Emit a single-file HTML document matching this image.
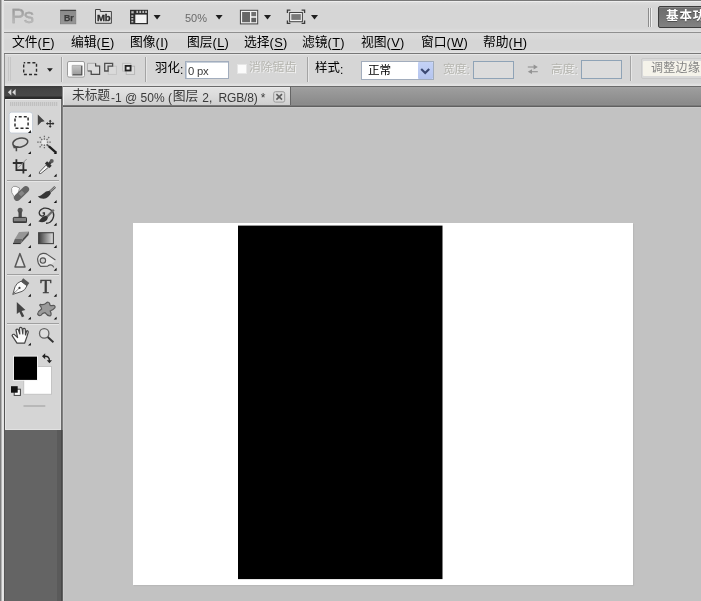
<!DOCTYPE html>
<html lang="zh">
<head>
<meta charset="utf-8">
<title>Photoshop</title>
<style>
*{box-sizing:border-box;margin:0;padding:0}
html,body{width:701px;height:601px;overflow:hidden}
body{position:relative;background:#c2c2c2;font-family:"Liberation Sans",sans-serif;font-size:12px;color:#000}
.a{position:absolute}
svg{display:block;overflow:visible}
.t{position:absolute;white-space:nowrap;display:flex;align-items:flex-start;line-height:1}
.t span{display:block}
.t span.c{font-family:"Liberation Sans","Noto Sans CJK SC",sans-serif;white-space:nowrap;overflow:visible;flex:none}
/* bars */
#appbar{left:0;top:0;width:701px;height:33px;background:linear-gradient(#787878 0,#787878 1px,#eeeeee 1px,#eeeeee 2px,#dddddd 2px,#d6d6d6 6px,#d6d6d6 28px,#dadada 30px,#e2e2e2 32px,#909090 32px)}
#menubar{left:0;top:33px;width:701px;height:21px;background:linear-gradient(#dbdbdb 0,#d9d9d9 5px,#d6d6d6 7px,#d6d6d6 17px,#e0e0e0 19px,#e4e4e4 20px,#777 20px)}
#optbar{left:0;top:54px;width:701px;height:33px;background:linear-gradient(#e6e6e6 0,#e6e6e6 1px,#d8d8d8 1px,#d6d6d6 4px,#d6d6d6 29px,#dedede 30px,#e4e4e4 32px,#6a6a6a 32px)}
#tabbar{left:0;top:87px;width:701px;height:20px;background:linear-gradient(#a2a2a2 0,#9c9c9c 2px,#8a8a8a 17px,#8e8e8e 18px,#787878 18px,#787878 19px,#606060 19px)}
#frameL{left:0;top:0;width:4px;height:601px;background:linear-gradient(90deg,#7e7e7e 0,#7e7e7e 1px,#b4b4b4 1px,#b4b4b4 2px,#e8e8e8 2px,#e2e2e2 4px)}
#frameL2{left:4px;top:54px;width:1px;height:547px;background:linear-gradient(#8e8e8e 0,#8e8e8e 32px,#555 32px)}
.t,#ps,#zoomtxt,#feathertxt,svg.a{will-change:transform}
#canvasbg{left:63px;top:107px;width:638px;height:494px;background:linear-gradient(#c9c9c9 0,#c9c9c9 1px,#c2c2c2 1px)}
#doc{left:133px;top:223px;width:500px;height:362px;background:#fff;box-shadow:1px 1px 1px rgba(0,0,0,.05)}
.menu{top:35.8px;color:#000;font-size:12.8px}
.menu span{padding-top:.6px;letter-spacing:.3px}
.menu u{text-decoration:underline;text-underline-offset:1.5px}

/* app bar */
#ps{left:11px;top:4.4px;font-size:21px;letter-spacing:-1.2px;color:transparent;line-height:24px;height:24px;background:linear-gradient(#999 5px,#bcbcbc 19px);-webkit-background-clip:text;background-clip:text;-webkit-text-stroke:.35px #aaa}
#zoomtxt{left:185px;top:11px;font-size:11px;color:#6a6a6a;line-height:14px}
#wsbtn{left:658px;top:6px;width:60px;height:22px;border:1px solid #3c3c3c;border-radius:2px;background:linear-gradient(#6c6c6c,#747474 50%,#828282);box-shadow:inset 0 1px 0 #8a8a8a;color:#fff}
/* options bar */
.opt{color:#000}
.dis{color:#b6b6b0;filter:drop-shadow(1px 1px 0 #f2f2f2)}
.inp{border:1px solid #a2adbd;background:#fff}
.inpd{border:1px solid #8fa3b6;background:#dcdcdc}
#feather{left:185px;top:61px;width:44px;height:18px;box-shadow:inset 1px 1px 0 #c8d0da}
#feathertxt{left:188.3px;top:64.3px;font-size:11.3px;letter-spacing:-.2px;color:#3c3c3c;line-height:14px}
#style{left:361px;top:61px;width:73px;height:19px}
#stylebtn{left:418px;top:62px;width:15px;height:17px;background:linear-gradient(#c4d2f6,#b4c4ee);border-radius:1px}
#w1{left:473px;top:61px;width:41px;height:18px}
#w2{left:581px;top:60px;width:41px;height:19px}
#chk{left:237px;top:64px;width:10px;height:10px;background:#fbfbfb;border:1px solid #e6e6e6}
#edgebtn{left:641px;top:58px;width:70px;height:21px;border:1px solid #c9c9c9;border-radius:2px;background:#d9d9d9}
#edgebtn i{position:absolute;left:1px;top:2px;right:0;height:15px;background:#f5f3ea;border-radius:1px}
.vsep{width:2px;background:linear-gradient(90deg,#a4a4a4 0,#a4a4a4 1px,#e6e6e6 1px)}
/* tab */
#tab{left:63px;top:87px;width:228px;height:18px;background:linear-gradient(#efefef 0,#e2e2e2 1px,#dcdcdc 8px,#cfcfcf 18px);border-right:1px solid #666;border-left:1px solid #eee}
#tabtxt{left:72.2px;top:90.2px;color:#3a3a3a;font-size:12px}
#tabtxt span{padding-top:1.5px}
/* tools */
#toolhdr{left:5px;top:86px;width:57px;height:13px;background:linear-gradient(#3a3a3a 0,#444 3px,#484848 10px,#2c2c2c 11px,#2a2a2a 13px)}
#tools{left:5px;top:99px;width:56px;height:331px;background:#d5d5d5;border-top:1px solid #efefef;border-left:1px solid #e4e4e4;border-right:1px solid #dedede;border-bottom:1px solid #e2e2e2}
#toolsR{left:61px;top:99px;width:2px;height:331px;background:linear-gradient(90deg,#6a6a6a 0,#6a6a6a 1px,#808080 1px)}
#toolsR4{left:61px;top:430px;width:2px;height:171px;background:linear-gradient(90deg,#484848 0,#484848 1px,#606060 1px)}
#toolsR3{left:62px;top:86px;width:1px;height:13px;background:#8a8a8a}
#toolsR2{left:63px;top:107px;width:1px;height:494px;background:#cacaca}
#dock{left:5px;top:430px;width:56px;height:171px;background:linear-gradient(90deg,#646464 0,#646464 52px,#5a5a5a 52px)}
#grip{left:10px;top:102px;width:48px;height:4px;background:repeating-linear-gradient(90deg,#c0c0c0 0,#c0c0c0 1px,#cfcfcf 1px,#cfcfcf 2px)}
#seltool{left:9px;top:112px;width:24px;height:21px;background:#fdfdfd;border:1px solid #c2cad2;border-radius:3px}
.hsep{left:7px;width:52px;height:2px;background:linear-gradient(#a0a0a0 0,#a0a0a0 1px,#e6e6e6 1px)}
</style>
</head>
<body>
<div id="canvasbg" class="a"></div>
<div id="doc" class="a"></div>
<svg class="a" style="left:0;top:0" width="701" height="601"><rect x="238" y="225.6" width="204.5" height="353.5" fill="#000"/></svg>

<div id="appbar" class="a"></div>
<div id="menubar" class="a"></div>
<div id="optbar" class="a"></div>
<div id="tabbar" class="a"></div>
<div id="frameL" class="a"></div>
<div id="frameL2" class="a"></div>

<!-- menu -->
<div class="t menu" style="left:12px"><span class="c" style="width:25.6px;height:15.84px;font-size:12.8px;line-height:12px;padding-top:0;letter-spacing:0">文件</span><span>(<u>F</u>)</span></div>
<div class="t menu" style="left:71px"><span class="c" style="width:25.6px;height:15.84px;font-size:12.8px;line-height:12px;padding-top:0;letter-spacing:0">编辑</span><span>(<u>E</u>)</span></div>
<div class="t menu" style="left:130px"><span class="c" style="width:25.6px;height:15.84px;font-size:12.8px;line-height:12px;padding-top:0;letter-spacing:0">图像</span><span>(<u>I</u>)</span></div>
<div class="t menu" style="left:186.5px"><span class="c" style="width:25.6px;height:15.84px;font-size:12.8px;line-height:12px;padding-top:0;letter-spacing:0">图层</span><span>(<u>L</u>)</span></div>
<div class="t menu" style="left:244px"><span class="c" style="width:25.6px;height:15.84px;font-size:12.8px;line-height:12px;padding-top:0;letter-spacing:0">选择</span><span>(<u>S</u>)</span></div>
<div class="t menu" style="left:302px"><span class="c" style="width:25.6px;height:15.84px;font-size:12.8px;line-height:12px;padding-top:0;letter-spacing:0">滤镜</span><span>(<u>T</u>)</span></div>
<div class="t menu" style="left:361px"><span class="c" style="width:25.6px;height:15.84px;font-size:12.8px;line-height:12px;padding-top:0;letter-spacing:0">视图</span><span>(<u>V</u>)</span></div>
<div class="t menu" style="left:421px"><span class="c" style="width:25.6px;height:15.84px;font-size:12.8px;line-height:12px;padding-top:0;letter-spacing:0">窗口</span><span>(<u>W</u>)</span></div>
<div class="t menu" style="left:483px"><span class="c" style="width:25.6px;height:15.84px;font-size:12.8px;line-height:12px;padding-top:0;letter-spacing:0">帮助</span><span>(<u>H</u>)</span></div>

<!-- app bar -->
<div id="ps" class="a">Ps</div>
<div id="zoomtxt" class="a">50%</div>
<div id="wsbtn" class="a"></div>
<div class="t" style="left:665.6px;top:10.6px;color:#fff;filter:drop-shadow(0 1px 0 rgba(0,0,0,.35))"><span class="c" style="width:40.2px;height:14.16px;font-size:12.5px;font-weight:bold;letter-spacing:.9px;line-height:10px">基本功</span></div>

<!-- options bar -->
<div class="a vsep" style="left:61px;top:57px;height:25px"></div>
<div class="a vsep" style="left:145px;top:57px;height:25px"></div>
<div class="a vsep" style="left:306.5px;top:57px;height:25px"></div>
<div class="a vsep" style="left:630px;top:56px;height:25px"></div>
<div class="t opt" style="left:154.8px;top:62.5px"><span class="c" style="width:25px;height:14.88px;font-size:12.4px;letter-spacing:.1px;line-height:11px">羽化</span><span style="font-size:12px;padding-top:1px">:</span></div>
<div id="feather" class="a inp"></div>
<div id="feathertxt" class="a">0 px</div>
<div id="chk" class="a"></div>
<div class="t dis" style="left:248.5px;top:61.5px"><span class="c" style="width:47.2px;height:14.4px;font-size:11.8px;line-height:10.8px">消除锯齿</span></div>
<div class="t opt" style="left:314.6px;top:63px"><span class="c" style="width:25px;height:14.88px;font-size:12.4px;letter-spacing:.1px;line-height:11px">样式</span><span style="font-size:12px;padding-top:1px">:</span></div>
<div id="style" class="a inp"></div>
<div id="stylebtn" class="a"></div>
<div class="t opt" style="left:367.5px;top:64px"><span class="c" style="width:23.2px;height:14.4px;font-size:11.6px;line-height:11px">正常</span></div>
<div class="t dis" style="left:443px;top:62.5px"><span class="c" style="width:23.4px;height:14.4px;font-size:11.7px;line-height:11px">宽度</span><span style="font-size:12px;padding-top:1px">:</span></div>
<div id="w1" class="a inpd"></div>
<div class="t dis" style="left:551px;top:62.5px"><span class="c" style="width:23.4px;height:14.4px;font-size:11.7px;line-height:11px">高度</span><span style="font-size:12px;padding-top:1px">:</span></div>
<div id="w2" class="a inpd"></div>
<div id="edgebtn" class="a"><i></i></div>
<div class="t" style="left:651.3px;top:62.7px;color:#858585"><span class="c" style="width:49.2px;height:14.4px;font-size:12px;letter-spacing:.3px;line-height:10.4px">调整边缘</span><span style="font-size:12px;padding-top:1px">...</span></div>

<!-- tab -->
<div id="tab" class="a"></div>
<div id="tabtxt" class="t"><span class="c" style="width:38.1px;height:15.6px;font-size:12.7px;line-height:11.8px;padding-top:0">未标题</span><span style="margin-left:1px">-1 @ 50% (</span><span class="c" style="width:25.6px;height:15.6px;font-size:12.8px;line-height:11.8px;padding-top:0;margin-left:.8px">图层</span><span style="margin-left:.6px">&nbsp;2,</span><span style="margin-left:6.2px;letter-spacing:-.15px">RGB/8) *</span></div>

<!-- tools -->
<div id="toolhdr" class="a"></div>
<div id="tools" class="a"></div>
<div id="dock" class="a"></div>
<div id="toolsR" class="a"></div>
<div id="toolsR4" class="a"></div>
<div id="toolsR3" class="a"></div>
<div id="toolsR2" class="a"></div>
<div id="grip" class="a"></div>
<div class="a hsep" style="top:180px"></div>
<div class="a hsep" style="top:274px"></div>
<div class="a hsep" style="top:323px"></div>

<svg class="a" style="left:0;top:0" width="701" height="601" viewBox="0 0 701 601">
<defs>
<linearGradient id="gH" x1="0" x2="1" y1="0" y2="0"><stop offset="0" stop-color="#3c3c3c"/><stop offset="1" stop-color="#e2e2e2"/></linearGradient>
<linearGradient id="gV" x1="0" x2="0" y1="0" y2="1"><stop offset="0" stop-color="#c6c6c6"/><stop offset="1" stop-color="#9a9a9a"/></linearGradient>
<linearGradient id="gBr" x1="0" x2="0" y1="0" y2="1"><stop offset="0" stop-color="#8a8a8a"/><stop offset="1" stop-color="#969696"/></linearGradient>
<path id="ct" d="M0,0 L0,-2.9 L-2.9,0 Z" fill="#101010"/>
<path id="dd" d="M0,0 L7,0 L3.5,4.6 Z" fill="#1e1e1e"/>
</defs>

<!-- ===== app bar icons ===== -->
<g id="ic-br">
<rect x="60.5" y="10.3" width="15.3" height="13.5" fill="url(#gBr)" stroke="#808080" stroke-width=".8"/>
<rect x="60.3" y="9.8" width="15.6" height="1.2" fill="#444"/>
<text x="68.7" y="20.8" font-size="8.8" font-weight="bold" fill="#3c3c3c" stroke="#3c3c3c" stroke-width=".25" text-anchor="middle" font-family="Liberation Sans, sans-serif" letter-spacing="-.3">Br</text>
</g>
<g id="ic-mb">
<path d="M95.5,23.3 L95.5,9.5 L100.3,9.5 L100.3,11.5 L111.4,11.5 L111.4,23.3 Z" fill="#dedede" stroke="#444" stroke-width="1"/>
<text x="103.6" y="20.7" font-size="9.6" font-weight="bold" fill="#2a2a2a" stroke="#2a2a2a" stroke-width=".3" text-anchor="middle" font-family="Liberation Sans, sans-serif" letter-spacing="-.3">Mb</text>
</g>
<g id="ic-film">
<rect x="130" y="9.8" width="18" height="14.4" fill="#2e2e2e"/>
<rect x="135.3" y="14.6" width="11.3" height="8.4" fill="#f4f4f4"/>
<g fill="#bdbdbd">
<rect x="131.3" y="11.2" width="2.4" height="2.2"/>
<rect x="136.4" y="10.8" width="1.7" height="2.2"/><rect x="139.4" y="10.8" width="1.7" height="2.2"/><rect x="142.4" y="10.8" width="1.7" height="2.2"/><rect x="145.2" y="10.8" width="1.7" height="2.2"/>
<rect x="131.3" y="15.2" width="2" height="1.7"/><rect x="131.3" y="18" width="2" height="1.7"/><rect x="131.3" y="20.8" width="2" height="1.7"/>
</g>
</g>
<use href="#dd" x="153.6" y="14.9"/>
<use href="#dd" x="215.6" y="14.9"/>
<g id="ic-arr">
<rect x="240.4" y="10.3" width="17.3" height="13.6" fill="#f2f2f2" stroke="#444" stroke-width="1"/>
<rect x="242.1" y="12" width="7.9" height="10.2" fill="#666"/>
<rect x="251.3" y="12" width="4.8" height="4.2" fill="#707070"/>
<rect x="251.3" y="17.8" width="4.8" height="4.4" fill="#606060"/>
</g>
<use href="#dd" x="264" y="14.9"/>
<g id="ic-scr">
<g fill="none" stroke="#3c3c3c" stroke-width="1.3">
<path d="M287.4,13 L287.4,10.2 L290.4,10.2"/><path d="M301.6,10.2 L304.6,10.2 L304.6,13"/>
<path d="M287.4,20.6 L287.4,23.4 L290.4,23.4"/><path d="M301.6,23.4 L304.6,23.4 L304.6,20.6"/>
</g>
<rect x="289.6" y="12.5" width="12.8" height="9.2" fill="#f0f0f0" stroke="#444" stroke-width="1"/>
<rect x="291.3" y="14.1" width="9.5" height="5.8" fill="#787878"/>
</g>
<use href="#dd" x="311" y="14.9"/>
<g id="ic-wssep">
<rect x="648" y="8" width="1" height="19" fill="#8c8c8c"/><rect x="649" y="8" width="1" height="19" fill="#ececec"/>
<rect x="650" y="8" width="1" height="19" fill="#9c9c9c"/><rect x="651" y="8" width="1" height="19" fill="#f0f0f0"/>
</g>

<!-- ===== options bar icons ===== -->
<g id="ic-optgrip" fill="#c6c6c6">
<rect x="8" y="57" width="1" height="24"/><rect x="10" y="57" width="1" height="24"/>
</g>
<rect x="23.7" y="62.7" width="12.8" height="11.8" fill="none" stroke="#2c2c2c" stroke-width="1.4" stroke-dasharray="3 2.1" stroke-dashoffset="1.5"/>
<path d="M47,68.2 L52.8,68.2 L49.9,71.8 Z" fill="#1e1e1e"/>
<g id="ic-selmode">
<rect x="67.5" y="61.5" width="17" height="15.6" rx="1.5" fill="#fcfcfc" stroke="#9c9c9c" stroke-width="1"/>
<rect x="72.2" y="65.4" width="9.6" height="9.4" fill="url(#gV)"/>
<path d="M72.2,74.8 L81.8,74.8 L81.8,65.4" fill="none" stroke="#4a4a4a" stroke-width="1.2"/>
<path d="M72.2,74.8 L72.2,65.4 L81.8,65.4" fill="none" stroke="#b0b0b0" stroke-width="1"/>
<!-- add -->
<path d="M87.5,63.3 L95.6,63.3 L95.6,66 L99.6,66 L99.6,74.4 L91.2,74.4 L91.2,71 L87.5,71 Z" fill="#dcdcdc" stroke="#a8a8a8" stroke-width=".9"/>
<path d="M95.6,63.3 L95.6,66 L99.6,66 L99.6,74.4 L91.2,74.4 L91.2,71 L87.8,71" fill="none" stroke="#4c4c4c" stroke-width="1.2"/>
<!-- subtract -->
<rect x="108.2" y="66.2" width="8.2" height="8.2" fill="#dadada" stroke="#c2c2c2" stroke-width=".9"/>
<path d="M104.7,63.3 L112.6,63.3 L112.6,66.1 L108.1,66.1 L108.1,71 L104.7,71 Z" fill="#d8d8d8" stroke="#505050" stroke-width="1.3"/>
<!-- intersect -->
<rect x="122.6" y="63.3" width="8.2" height="7.8" fill="#dcdcdc" stroke="#bcbcbc" stroke-width=".9"/>
<rect x="126.2" y="66.2" width="8.4" height="8.2" fill="#dcdcdc" stroke="#b4b4b4" stroke-width=".9"/>
<rect x="125.6" y="65.9" width="5" height="4.6" fill="#e8e8e8" stroke="#222" stroke-width="1.8"/>
</g>
<g id="ic-chev"><path d="M421.2,68.9 L425.2,72.9 L429.2,68.9" fill="none" stroke="#3a4872" stroke-width="2.1"/></g>
<g id="ic-swapwh" stroke="#939393" fill="#939393">
<path d="M527.8,67 L535,67" stroke-width="1.1"/><path d="M533.6,64.6 L537.8,67 L533.6,69.4 Z" stroke="none"/>
<path d="M530.6,71.7 L537.8,71.7" stroke-width="1.1"/><path d="M532,69.3 L527.8,71.7 L532,74.1 Z" stroke="none"/>
</g>
<g id="ic-tabclose">
<rect x="273.7" y="91.7" width="11" height="10.4" rx="1.8" fill="#dadada" stroke="#9a9a9a" stroke-width="1"/>
<path d="M276.4,94.2 L282,99.6 M282,94.2 L276.4,99.6" stroke="#5c5c5c" stroke-width="1.6" fill="none"/>
</g>
<g id="ic-collapse" fill="#d8d8d8"><path d="M11.3,89 L11.3,95.4 L7.9,92.2 Z"/><path d="M15.6,89 L15.6,95.4 L12.2,92.2 Z"/></g>

<!-- ===== tool icons ===== -->
<g id="corner-tris">
<use href="#ct" x="30.9" y="132.9"/>
<use href="#ct" x="30.9" y="154.1"/><use href="#ct" x="56.6" y="154.1"/>
<use href="#ct" x="30.9" y="176.7"/><use href="#ct" x="56.6" y="176.7"/>
<use href="#ct" x="30.9" y="202.9"/><use href="#ct" x="56.6" y="202.9"/>
<use href="#ct" x="30.9" y="225.7"/><use href="#ct" x="56.6" y="225.7"/>
<use href="#ct" x="30.9" y="248"/><use href="#ct" x="56.6" y="248"/>
<use href="#ct" x="30.9" y="270.7"/><use href="#ct" x="56.6" y="270.7"/>
<use href="#ct" x="30.9" y="296.7"/><use href="#ct" x="56.6" y="296.7"/>
<use href="#ct" x="30.9" y="319.6"/><use href="#ct" x="56.6" y="319.6"/>
<use href="#ct" x="30.9" y="345.6"/>
</g>
<!-- marquee -->
<rect x="9.1" y="112.1" width="23.5" height="21" rx="2.6" fill="#fdfdfd" stroke="#c4ccd6" stroke-width="1"/>
<use href="#ct" x="30.9" y="132.9"/>
<rect x="15" y="116.7" width="13.1" height="11.5" fill="none" stroke="#2c2c2c" stroke-width="1.5" stroke-dasharray="3 2.1" stroke-dashoffset="1.4"/>
<!-- move -->
<path d="M37.8,114.4 L44.7,121.3 L41.3,121.9 L37.8,125.4 Z" fill="#444"/>
<g stroke="#2e2e2e" stroke-width="1.1" fill="#2e2e2e">
<path d="M46.6,123.6 L53.8,123.6 M50.2,120.4 L50.2,127.2" fill="none"/>
<path d="M48.7,121.6 L50.2,119.8 L51.7,121.6 Z M48.7,125.9 L50.2,127.7 L51.7,125.9 Z M47.8,122.1 L46,123.6 L47.8,125.1 Z M52.6,122.1 L54.4,123.6 L52.6,125.1 Z" stroke="none"/>
</g>
<!-- lasso -->
<g fill="none" stroke="#4a4a4a" stroke-width="1.55">
<ellipse cx="20.3" cy="142.6" rx="7.6" ry="4.4" transform="rotate(-12 20.3 142.6)"/>
<path d="M12.8,145.4 Q15.8,146 16.4,148 L16.4,151.2 M13.4,147.6 L18.6,147"/>
</g>
<!-- wand -->
<g>
<circle cx="44.4" cy="142.2" r="2.7" fill="#e9e9e9"/>
<g stroke="#6a6a6a" stroke-width="1.25" fill="none" stroke-dasharray="1.5 1">
<path d="M44.4,135.8 L44.4,140 M44.4,144.6 L44.4,148.2 M37.2,142.2 L42,142.2 M46.8,142.2 L51.8,142.2"/>
<path d="M39.6,137 L42.6,140.4 M49.2,137 L46.2,140.4 M39.6,147.4 L42.6,144"/>
</g>
<path d="M46.6,144.4 L49.4,146.8" stroke="#555" stroke-width="1.6" fill="none"/><path d="M49,146.4 L56,152.6" stroke="#1e1e1e" stroke-width="2.3" fill="none"/>
</g>
<!-- crop -->
<g stroke="#2e2e2e" stroke-width="1.8" fill="none">
<path d="M12.8,163 L23.4,163 L23.4,173.6"/>
<path d="M16.4,159.3 L16.4,170.2 L26.8,170.2"/>
<path d="M18.2,167.6 L26.6,159.1" stroke="#8c8c8c" stroke-width="1"/>
</g>
<!-- eyedropper -->
<g>
<path d="M46,165.2 L39.5,172 L39.3,173.6 L40.9,173.5 L48.4,167.3 Z" fill="#fafafa" stroke="#5c5c5c" stroke-width="1"/>
<path d="M46,162.4 L50.6,166.8" stroke="#303030" stroke-width="3.2" fill="none"/>
<path d="M49,164 L51.4,161.4" stroke="#3a3a3a" stroke-width="2.6" fill="none"/>
<circle cx="51.7" cy="160.9" r="2" fill="#5a5a5a"/>
</g>
<!-- healing -->
<g>
<path d="M14.5,197.4 Q10.4,192 11.6,188.4 Q13,185.4 16,186.4 L19.6,188 L17.2,196.6 Z" fill="#fbfbfb" stroke="#8e8e8e" stroke-width=".9"/>
<path d="M17.2,197.6 L25.8,189.4" stroke="#646464" stroke-width="6.6" stroke-linecap="round" fill="none"/>
<path d="M19.8,195.1 L23.2,191.9" stroke="#858585" stroke-width="4" fill="none"/>
</g>
<!-- brush -->
<g>
<path d="M55.2,186.8 L49.8,191.8" stroke="#5e5e5e" stroke-width="2.5" fill="none"/>
<path d="M55.1,186.9 L49.6,191.9" stroke="#c8c8c8" stroke-width=".7" fill="none"/>
<path d="M49.4,190.8 Q45.6,191.2 43.4,193.4 Q41,195.8 37.8,196.5 Q39.8,198.9 43.8,198.8 Q48.6,198.2 51,193 Z" fill="#363636"/>
</g>
<!-- stamp -->
<g>
<circle cx="20.1" cy="210.2" r="2.5" fill="#555"/>
<rect x="18.5" y="211.6" width="3.3" height="5.8" fill="#484848"/>
<rect x="13.3" y="217.4" width="13.2" height="4.9" rx=".8" fill="#808080" stroke="#333" stroke-width="1"/>
<rect x="13" y="221.4" width="13.8" height="1.3" fill="#333"/>
</g>
<!-- history brush -->
<g fill="none">
<path d="M42.6,213 L44.4,213 L44.4,214.6 Q43.6,216.5 41.6,216.1 Q39.2,215.2 39.2,212.7 Q39.6,209.6 44,208.2 Q48,207.6 51,210 Q54.2,212.6 53.7,216 Q53,220.4 50,222.2 Q48,223.4 46,223.2" stroke="#333" stroke-width="1.3"/>
<path d="M53.8,209.8 L47,216.8" stroke="#6a6a6a" stroke-width="2.2"/>
<path d="M46.2,215.6 Q42,216.4 40.6,219 Q39.8,220.6 38.3,221.2 Q41.4,222.8 44.6,221.8 Q47.6,220.4 48,217.4 Z" fill="#333"/>
</g>
<!-- eraser -->
<g>
<path d="M14.8,239 L19,232 L29,231.6 L22.6,239 Z" fill="#969696"/>
<path d="M22.6,239 L29,231.6 L28.6,235 L20.6,243.8 Z" fill="#4a4a4a"/>
<path d="M14.8,239 L22.6,239 L20.6,243.8 L13,243.8 Z" fill="#666"/>
<path d="M13,243.6 L20.6,243.6" stroke="#2a2a2a" stroke-width="1"/>
</g>
<!-- gradient -->
<rect x="38.6" y="232.7" width="14.8" height="10.9" fill="url(#gH)" stroke="#444" stroke-width="1.1"/>
<!-- blur -->
<path d="M19.9,253.6 L25,267 L15,267 Z" fill="#e0e0e0" stroke="#585858" stroke-width="1.5" stroke-linejoin="round"/>
<!-- dodge -->
<g>
<path d="M37.6,258.8 Q38.4,254 42.8,253.4 Q46,253.2 47.6,254.6 L55.4,260 L55.2,261 Q51.4,264.4 48.4,266 L40.6,266.4 Q38,264.8 37.6,261.6 Z" fill="#e6e6e6" stroke="none"/>
<path d="M55.4,260 L47.6,254.6 Q46,253.2 42.8,253.4 Q38.4,254 37.6,258.8 Q37.4,263.6 40.6,266.4 L47.6,266.2 Q49.6,264.4 51.4,265 Q53,265.6 53.8,267.4" fill="none" stroke="#555" stroke-width="1.1"/>
<circle cx="42.9" cy="260.6" r="2.7" fill="#cfcfcf" stroke="#555" stroke-width="1.1"/>
</g>
<!-- pen -->
<g>
<path d="M21,281.2 L27,285.8 Q25,290.4 22,291.4 L12.8,294.4 L15,286.8 Q16.6,282.8 21,281.2 Z" fill="#fbfbfb" stroke="#585858" stroke-width="1"/>
<path d="M23.2,278.2 L29.3,282.9 L27.1,285.9 L21,281.2 Z" fill="#555"/>
<path d="M12.8,294.4 L19.2,288.2" stroke="#777" stroke-width=".8"/>
<circle cx="19.5" cy="287.9" r="1.1" fill="#3a3a3a"/>
<path d="M12.6,294.6 L15.2,292.6 L14,291.4 Z" fill="#666"/>
</g>
<!-- T -->
<text x="45.8" y="292.8" font-size="18.2" fill="#404040" stroke="#404040" stroke-width=".55" text-anchor="middle" font-family="Liberation Serif, serif">T</text>
<!-- path select -->
<path d="M16.8,301.9 L25.4,310 L21.6,310.9 L24.3,316.2 L21.9,317.2 L19.4,312 L16.8,314 Z" fill="#444"/>
<!-- shape blob -->
<path d="M40.4,304.4 Q44,305.4 46.4,302.8 Q48.4,301.4 49.6,303.4 Q49.6,306 52,305.6 Q55.6,304.8 55,307.6 Q53,310.2 50.2,311 Q51.8,314 50.6,315.6 Q48,316.6 45,312.6 Q42.2,313.2 41,315.2 Q38.6,316.2 37.6,314 Q38.2,311 41.6,309 Q41.2,306.4 39.8,305.6 Q39.6,304.6 40.4,304.4 Z" fill="#9a9a9a" stroke="#585858" stroke-width="1.2"/>
<!-- hand -->
<path d="M17,343.2 L24.6,343.2 L27,336.4 L28.3,332 Q28,330.4 26.7,330.8 L25.5,335 L25.3,329.2 Q24.1,327.6 23,329 L22.8,334 L22,328.2 Q20.6,326.6 19.5,328.2 L19.8,334 L18.3,329.6 Q17,328.4 16,329.8 L17.6,337.6 L14.2,334.4 Q12.4,333.8 12.1,335.6 Z" fill="#fbfbfb" stroke="#444" stroke-width="1.2" stroke-linejoin="round"/>
<!-- zoom -->
<g fill="none">
<circle cx="44.2" cy="333.4" r="4.7" stroke="#626262" stroke-width="1.3" fill="#dedede"/>
<path d="M47.7,337 L53.4,342.2" stroke="#333" stroke-width="1.9"/>
</g>
<!-- colour swatches -->
<g>
<rect x="23.7" y="366.5" width="27.8" height="27.8" fill="#fff" stroke="#c4c4c4" stroke-width="1"/>
<rect x="13.2" y="355.7" width="24.6" height="25" fill="#f6f6f6"/>
<rect x="14" y="356.6" width="23" height="23.3" fill="#000"/>
<rect x="14.2" y="389.2" width="6.2" height="6.2" fill="#fbfbfb" stroke="#444" stroke-width="1"/>
<rect x="11" y="386.2" width="6.7" height="6.5" fill="#111"/>
<path d="M44.6,356.3 Q49.6,356 49.4,361" fill="none" stroke="#222" stroke-width="1.4"/>
<path d="M42,356.2 L45.2,353.2 L45.2,359.2 Z" fill="#222"/>
<path d="M49.4,363.3 L46.8,360.2 L52,360.2 Z" fill="#222"/>
<rect x="23.5" y="405.3" width="21.8" height="1.4" fill="#ababab"/>
</g>

</svg>


</body>
</html>
